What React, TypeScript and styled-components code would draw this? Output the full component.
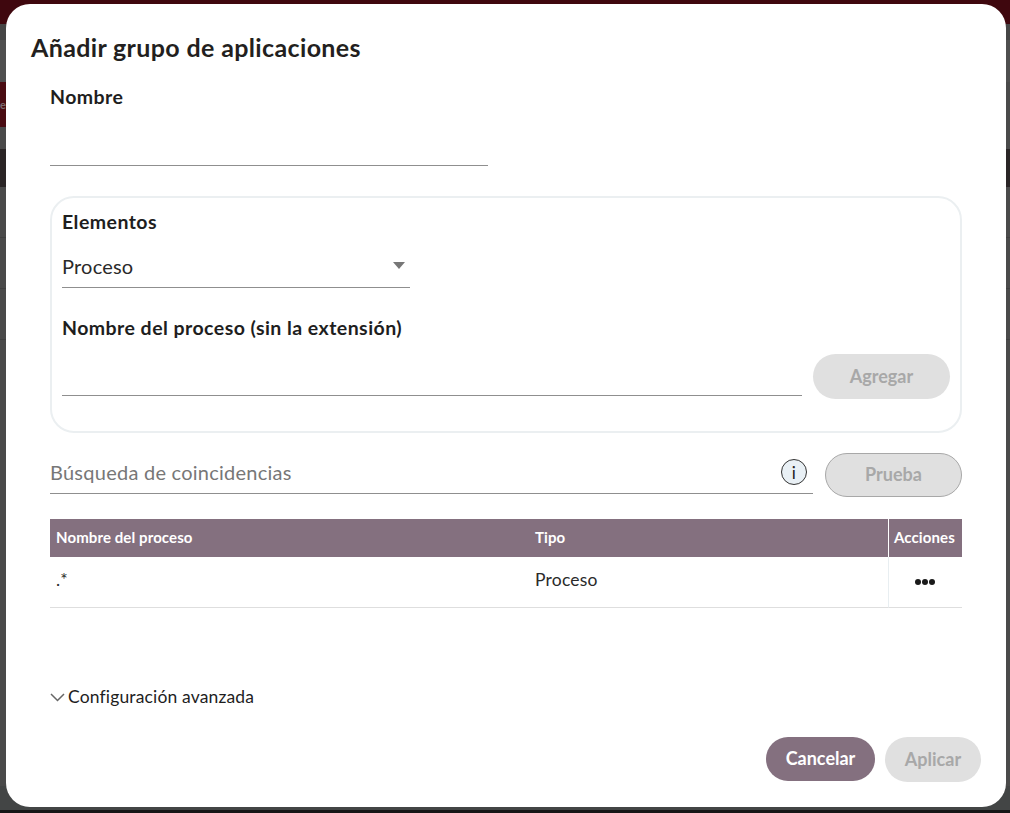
import React from "react";
import styled, { createGlobalStyle } from "styled-components";

const GlobalStyle = createGlobalStyle`
  html, body {
    margin: 0;
    padding: 0;
    background: #4a4a4a;
    overflow: hidden;
  }
  * {
    box-sizing: border-box;
  }
`;

const Page = styled.div`
  position: relative;
  width: 1010px;
  height: 813px;
  overflow: hidden;
  font-family: Lato, "Liberation Sans", sans-serif;
  color: #1e1e1e;
`;

const Backdrop = styled.div`
  display: flex;
  flex-direction: column;
  height: 100%;
`;

const Band = styled.div<{ $h: number; $bg: string; $line?: boolean }>`
  height: ${(p) => p.$h}px;
  background: ${(p) => p.$bg};
  border-bottom: ${(p) => (p.$line ? "1px solid #404040" : "none")};
`;

const RedTab = styled.div`
  width: 40px;
  height: 100%;
  background: #4a0c12;
  color: #7a6a6c;
  font-size: 11px;
  font-weight: 700;
  line-height: 45px;
`;

const Modal = styled.div`
  position: absolute;
  top: 4px;
  left: 6px;
  width: 1000px;
  height: 803px;
  background: #fff;
  border-radius: 24px;
  padding: 29px 25px 25px 25px;
  display: flex;
  flex-direction: column;
`;

const Title = styled.h2`
  margin: 0 0 25px 0;
  font-size: 25px;
  line-height: 28px;
  font-weight: 700;
  letter-spacing: 0.36px;
  color: #231f20;
`;

const Body = styled.div`
  padding: 0 19px;
  display: flex;
  flex-direction: column;
`;

const Label = styled.label`
  display: block;
  font-size: 19.5px;
  line-height: 22px;
  font-weight: 700;
  letter-spacing: 0.45px;
  color: #1e1e1e;
`;

const NameInput = styled.div`
  width: 438px;
  height: 58px;
  border-bottom: 1px solid #8f8f8f;
  margin-bottom: 30px;
`;

const Card = styled.section`
  height: 237px;
  border: 2px solid #ebeff1;
  border-radius: 24px;
  padding: 13px 10px 0 10px;
  margin-bottom: 20px;
`;

const Select = styled.div`
  width: 348px;
  height: 44px;
  margin: 11px 0 29px;
  border-bottom: 1px solid #8f8f8f;
  display: flex;
  align-items: center;
  justify-content: space-between;
  font-size: 20px;
  letter-spacing: 0.2px;
  color: #2a2a2a;
  padding-right: 5px;
`;

const Caret = styled.span`
  width: 0;
  height: 0;
  border-left: 6.5px solid transparent;
  border-right: 6.5px solid transparent;
  border-top: 7px solid #777;
`;

const AddRow = styled.div`
  display: flex;
  align-items: flex-end;
  gap: 11px;
  margin-top: 12px;
`;

const Line = styled.div`
  flex: 1;
  height: 45px;
  margin-bottom: 3px;
  border-bottom: 1px solid #8f8f8f;
`;

const Pill = styled.button<{ $w: number; $h: number; $primary?: boolean; $outlined?: boolean }>`
  width: ${(p) => p.$w}px;
  height: ${(p) => p.$h}px;
  border-radius: ${(p) => p.$h / 2}px;
  border: ${(p) => (p.$outlined ? "1px solid #a8a8a8" : "none")};
  background: ${(p) => (p.$primary ? "#84707f" : "#e0e0e0")};
  color: ${(p) => (p.$primary ? "#fff" : "#a8a8a8")};
  font-family: inherit;
  font-size: 18px;
  font-weight: 700;
  padding: 0 0 2px;
  flex: none;
`;

const SearchRow = styled.div`
  display: flex;
  align-items: flex-end;
  gap: 12px;
  height: 44px;
  margin-bottom: 22px;
`;

const SearchField = styled.div`
  flex: 1;
  height: 41px;
  margin-bottom: 3px;
  border-bottom: 1px solid #8f8f8f;
  display: flex;
  align-items: center;
  justify-content: space-between;
  padding: 0 6px 2px 0;
  font-size: 20px;
  letter-spacing: 0.25px;
  color: #777;
`;

const InfoIcon = styled.span`
  width: 26px;
  height: 26px;
  border-radius: 50%;
  border: 1px solid #333;
  background: #e9f0f5;
  color: #222;
  display: flex;
  align-items: center;
  justify-content: center;
  font-size: 17px;
`;

const Table = styled.div`
  display: grid;
  grid-template-columns: 479px 359px 74px;
`;

const HeadCell = styled.div<{ $divider?: boolean }>`
  height: 38px;
  background: #84707f;
  color: #fff;
  font-size: 15px;
  font-weight: 700;
  letter-spacing: 0.1px;
  display: flex;
  align-items: center;
  padding: 0 0 2px ${(p) => (p.$divider ? "5px" : "6px")};
  border-left: ${(p) => (p.$divider ? "1px solid #fff" : "none")};
`;

const Cell = styled.div<{ $action?: boolean }>`
  height: 51px;
  border-bottom: 1px solid #dedede;
  border-left: ${(p) => (p.$action ? "1px solid #e8eef1" : "none")};
  display: flex;
  align-items: center;
  justify-content: ${(p) => (p.$action ? "center" : "flex-start")};
  padding: ${(p) => (p.$action ? "0 7px 2px 5px" : "0 6px 6px")};
  font-size: 17.5px;
  letter-spacing: 0.2px;
  color: #2a2a2a;
`;

const Dots = styled.span`
  display: flex;
  gap: 1px;
  margin-top: 2px;
`;

const Dot = styled.i`
  width: 6px;
  height: 6px;
  border-radius: 50%;
  background: #1a1a1a;
`;

const Advanced = styled.div`
  display: flex;
  align-items: center;
  gap: 3px;
  margin-top: 78px;
  font-size: 17.5px;
  letter-spacing: 0.15px;
  line-height: 22px;
  color: #1e1e1e;
`;

const Footer = styled.footer`
  margin-top: auto;
  display: flex;
  justify-content: flex-end;
  align-items: flex-start;
  gap: 10px;
`;

export default function App() {
  return (
    <Page>
      <GlobalStyle />
      <Backdrop>
        <Band $h={24} $bg="#3f070e" />
        <Band $h={16} $bg="#454545" />
        <Band $h={42} $bg="#4f4f4f" />
        <Band $h={45} $bg="#4a4a4a">
          <RedTab>e</RedTab>
        </Band>
        <Band $h={22} $bg="#4a4a4a" />
        <Band $h={38} $bg="#2a2526" />
        <Band $h={51} $bg="#4a4a4a" $line />
        <Band $h={51} $bg="#4a4a4a" $line />
        <Band $h={51} $bg="#4a4a4a" $line />
        <Band $h={446} $bg="#4a4a4a" />
        <Band $h={24} $bg="#434545" />
        <Band $h={3} $bg="#161616" />
      </Backdrop>
      <Modal>
        <Title>Añadir grupo de aplicaciones</Title>
        <Body>
          <Label>Nombre</Label>
          <NameInput />
          <Card>
            <Label>Elementos</Label>
            <Select>
              Proceso
              <Caret />
            </Select>
            <Label>Nombre del proceso (sin la extensión)</Label>
            <AddRow>
              <Line />
              <Pill $w={137} $h={45}>Agregar</Pill>
            </AddRow>
          </Card>
          <SearchRow>
            <SearchField>
              Búsqueda de coincidencias
              <InfoIcon>i</InfoIcon>
            </SearchField>
            <Pill $w={137} $h={44} $outlined>Prueba</Pill>
          </SearchRow>
          <Table>
            <HeadCell>Nombre del proceso</HeadCell>
            <HeadCell>Tipo</HeadCell>
            <HeadCell $divider>Acciones</HeadCell>
            <Cell>.*</Cell>
            <Cell>Proceso</Cell>
            <Cell $action>
              <Dots>
                <Dot />
                <Dot />
                <Dot />
              </Dots>
            </Cell>
          </Table>
          <Advanced>
            <svg width="15" height="9" viewBox="0 0 15 9" fill="none">
              <path d="M1 1l6.5 6.5L14 1" stroke="#666" strokeWidth="1.5" />
            </svg>
            Configuración avanzada
          </Advanced>
        </Body>
        <Footer>
          <Pill $w={109} $h={44} $primary>Cancelar</Pill>
          <Pill $w={96} $h={45}>Aplicar</Pill>
        </Footer>
      </Modal>
    </Page>
  );
}
